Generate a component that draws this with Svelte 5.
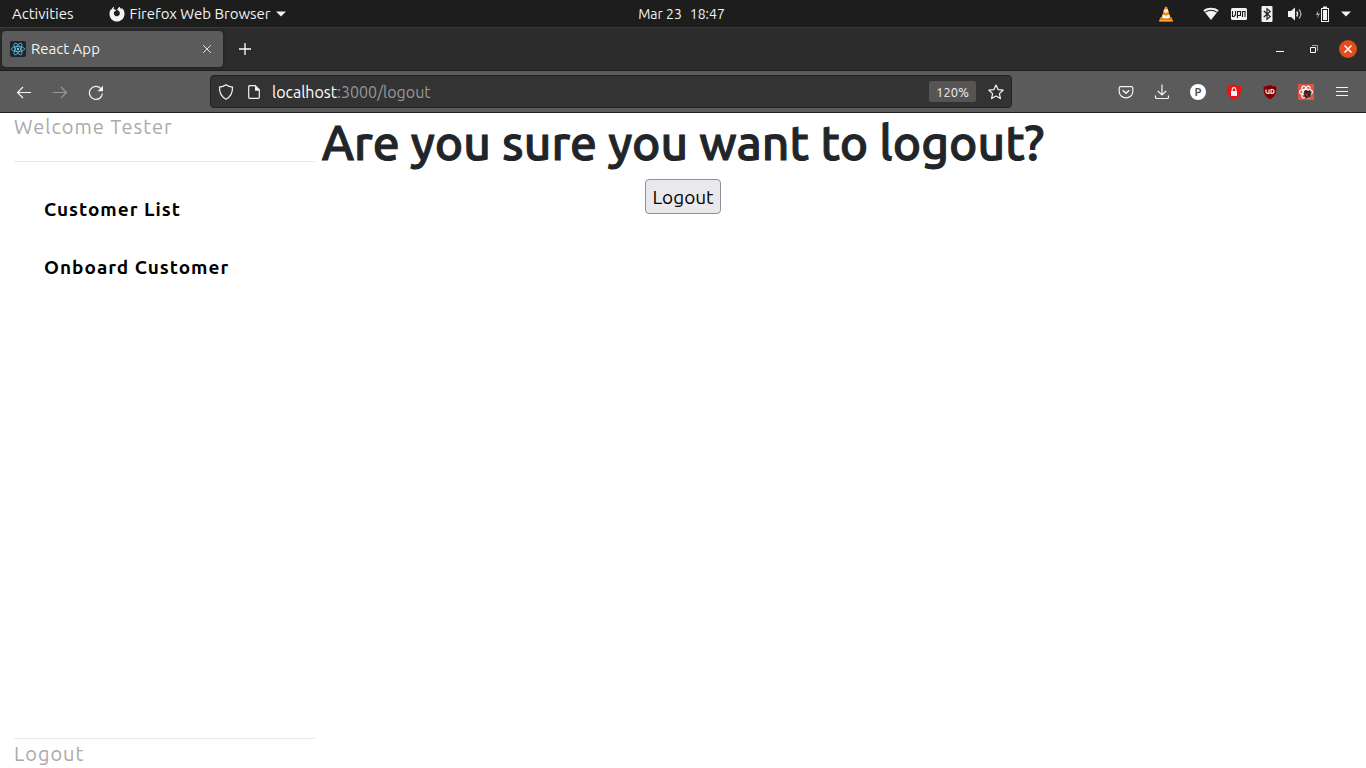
<script>
  const links = ['Customer List', 'Onboard Customer'];
  const orbits = [0, 60, 120];
</script>

<svelte:head><title>React App</title></svelte:head>

<div class="screen">
  <header class="system">
    <div class="system-left">
      <button>Activities</button>
      <button class="app-menu">
        <svg width="16" height="16" viewBox="0 0 16 16"><path fill="#f2f2f2" d="M5 .6 4.7 3 7.4 4.2 5.6 5.5C4.8 6.2 4.6 7.4 5.1 8.5c.7 1.5 2.3 2.2 3.8 1.6 1.8-.6 2.5-2.7 1.6-4.3C9.8 4.8 9 4.2 8.1 4.1 8.6 2.4 9.6 1.3 11 .8c-.1 1 .4 1.6 1.3 2.2l.5-1c2 1.600 2.900 3.800 2.700 6.300-.3 4.200-3.500 7.300-7.500 7.300-4.200 0-7.400-3.200-7.500-7.300C.4 6 1.100 4.200 2.200 3l.3 1C3 2.500 3.900 1.300 5 .6z"/></svg>
        <span>Firefox Web Browser</span>
        <svg width="10" height="6" viewBox="0 0 10 6"><path fill="#f2f2f2" d="M0 .5h10L5 5.500z"/></svg>
      </button>
    </div>
    <button class="clock"><span>Mar 23</span><span>18:47</span></button>
    <div class="tray">
      <svg class="vlc" width="16" height="16" viewBox="0 0 16 16"><path fill="#e87800" d="M2.500 11h11l1.800 4.500H.7z"/><path fill="#f58a0b" d="M7 .7h2l3.400 11.100c-1.500 1.800-7.300 1.800-8.800 0z"/><path fill="#eee" d="m6.300 3-.9 3q2.600 1.300 5.200 0l-.9-3q-1.700.8-3.400 0zM4.600 8.600l-.8 2.600q4.200 2.400 8.400 0l-.8-2.600q-3.400 1.800-6.800 0z"/><path stroke="#ffc35c" d="M1.500 14.800h13"/></svg>
      <svg width="16" height="16" viewBox="0 0 16 16"><path fill="#f2f2f2" d="M.3 4.300C4.500 1 11.500 1 15.700 4.300L8 14z"/><path fill="none" stroke="#1d1d1d" stroke-width="1.100" d="M2.300 6.100C5.500 3.600 10.500 3.600 13.700 6.100"/></svg>
      <svg width="16" height="16" viewBox="0 0 16 16"><rect y="2" width="16" height="12" rx="1.500" fill="#f2f2f2"/><path fill="none" stroke="#1d1d1d" stroke-width="1.100" d="M1.500 5v5.500H3L4.500 9V5M6.500 12V5.500h3v4h-3M11.500 11V5.500H14V11"/></svg>
      <svg width="16" height="16" viewBox="0 0 16 16"><rect x="2.500" width="11" height="16" rx="1" fill="#f2f2f2"/><path fill="none" stroke="#1d1d1d" stroke-width="1.200" d="m4.800 5 6.400 5.600L8 13.300V2.700l3.200 2.700L4.800 11"/></svg>
      <svg width="16" height="16" viewBox="0 0 16 16"><path fill="#f2f2f2" d="M1 5h3l4-3.500v13L4 11H1z"/><path fill="none" stroke="#f2f2f2" stroke-width="1.300" d="M9.700 5.500q1.800 2.500 0 5"/><path fill="none" stroke="#aaa" stroke-width="1.300" d="M12 3.500q3.800 4.500 0 9"/></svg>
      <div class="power">
        <svg width="16" height="16" viewBox="0 0 16 16"><path fill="#aaa" d="M3.500 4 .8 9H3l-.9 4L5 7.500H2.900z"/><path fill="#f2f2f2" d="M8 .500h4V2h2v14H6V2h2zM7 3v12h6V3z" fill-rule="evenodd"/><path fill="#f2f2f2" d="M8 4h4v10H8z"/></svg>
        <svg width="10" height="6" viewBox="0 0 10 6"><path fill="#f2f2f2" d="M0 .5h10L5 5.500z"/></svg>
      </div>
    </div>
  </header>

  <div class="tabs">
    <div class="tab">
      <svg width="16" height="16" viewBox="0 0 16 16"><rect width="16" height="16" rx="2" fill="#20232a"/><g fill="none" stroke="#61dafb" stroke-width=".7">{#each orbits as a}<ellipse cx="8" cy="8" rx="6.600" ry="2.600" transform="rotate({a} 8 8)"/>{/each}</g><circle cx="8" cy="8" r="1.200" fill="#61dafb"/></svg>
      <span>React App</span>
      <button aria-label="Close tab"><svg width="10" height="10" viewBox="0 0 10 10"><path stroke="#e4e4e4" d="m1.200 1.200 7.600 7.600m0-7.600L1.200 8.800"/></svg></button>
    </div>
    <button class="new-tab" aria-label="New tab"><svg width="12" height="12" viewBox="0 0 12 12"><path stroke="#fff" stroke-width="1.300" d="M6 0v12M0 6h12"/></svg></button>
    <div class="window-controls">
      <button aria-label="Minimize"><svg width="18" height="18" viewBox="0 0 18 18"><path stroke="#fff" d="M5 11.500h8"/></svg></button>
      <button aria-label="Restore"><svg width="18" height="18" viewBox="0 0 18 18"><path fill="none" stroke="#aaa" d="M7 5.500h5.500V11"/><path fill="none" stroke="#fff" d="M5.500 7.500h5v5h-5z"/></svg></button>
      <button aria-label="Close window"><svg width="18" height="18" viewBox="0 0 18 18"><circle cx="9" cy="9" r="9" fill="#e34c1b"/><path stroke="#fff" stroke-width="1.500" d="m5.500 5.500 7 7m0-7-7 7"/></svg></button>
    </div>
  </div>

  <div class="toolbar">
    <div class="tools">
      <button aria-label="Back"><svg width="16" height="16" viewBox="0 0 16 16"><path d="M15 8.500H1.500M7 3 1.500 8.500 7 14"/></svg></button>
      <button aria-label="Forward" disabled><svg width="16" height="16" viewBox="0 0 16 16"><path d="M1 8.500h13.500M9 3l5.500 5.500L9 14"/></svg></button>
      <button aria-label="Reload"><svg width="16" height="16" viewBox="0 0 16 16"><path d="M14.400 9.500A6.500 6.500 0 1 1 12.700 4.500"/><path class="solid" d="M15 1.800v5.400H9.600z"/></svg></button>
    </div>
    <div class="address">
      <svg width="16" height="16" viewBox="0 0 16 16"><path d="M8 .8c1.800 1.300 4 2.100 6.500 2.300C14.700 9 13 12.800 8 15.200 3 12.800 1.300 9 1.500 3.100 4 2.900 6.200 2.100 8 .8z"/></svg>
      <svg width="16" height="16" viewBox="0 0 16 16"><path d="M3.700 1.700h5.500l4.100 4.100v7.500q0 1-1 1H3.700q-1 0-1-1V2.700q0-1 1-1z"/><path class="solid" d="M9 1.500 13.500 6v.800H9z"/></svg>
      <a class="url" href="#logout">localhost<span>:3000/logout</span></a>
      <button class="scale">120%</button>
      <button aria-label="Bookmark this page"><svg width="16" height="16" viewBox="0 0 16 16"><path stroke-linejoin="round" d="m8 1 2.100 4.600 5 .6-3.700 3.400 1 5L8 12.100l-4.400 2.500 1-5L.9 6.200l5-.6z"/></svg></button>
    </div>
    <div class="tools">
      <button aria-label="Save to Pocket"><svg width="16" height="16" viewBox="0 0 16 16"><path d="M2.500 2.700h11q1.300 0 1.300 1.300v3.500a6.800 6.300 0 0 1-13.600 0V4q0-1.300 1.300-1.300z"/><path stroke-width="1.500" d="M4.800 6.300 8 9.300l3.200-3"/></svg></button>
      <button aria-label="Downloads"><svg width="16" height="16" viewBox="0 0 16 16"><path d="M8 .5V11M3.800 7 8 11l4.200-4M1.500 11.500v1.700q0 1.300 1.300 1.300h10.400q1.300 0 1.300-1.300v-1.700"/></svg></button>
      <button class="profile" aria-label="Privacy extension">P</button>
      <button aria-label="Secure connection"><svg width="16" height="16" viewBox="0 0 16 16"><path class="red" d="M8 .2c2 1.200 4.500 2 7.200 2.100.3 6.700-1.500 11.300-7.200 13.500C2.300 13.600.5 9 .8 2.300 3.500 2.200 6 1.400 8 .2z"/><path class="solid" d="M5 7h6v5H5z"/><path d="M6.200 7V5.500a1.800 1.800 0 0 1 3.600 0V7"/></svg></button>
      <button aria-label="uBlock Origin"><svg width="16" height="16" viewBox="0 0 16 16"><path class="maroon" d="M8 .5c2 1 4.300 1.700 6.800 1.800.3 6.500-1.300 11-6.800 13.200C2.500 13.300.9 8.800 1.200 2.300 3.700 2.200 6 1.500 8 .5z"/><path d="M4 5.500v2.300q0 1.500 1.500 1.500H7V5.500M9 5.500v3.800h1q2 0 2-1.900t-2-1.900z"/></svg></button>
      <button aria-label="React Developer Tools"><svg width="16" height="16" viewBox="0 0 16 16"><path class="coral" d="M0 0h16v16H0z"/>{#each orbits as a}<ellipse cx="8" cy="8" rx="6.500" ry="2.600" transform="rotate({a} 8 8)"/>{/each}<path class="bug" d="M6 7.500 8 6l2 1 2-1 .5 2 1 1-1 1.500.3 2-1.800 1.500-1.500-.5L8 14.500l-1-1.800-1.500-.2 1-1.800L5 9.500l1.500-.8z"/><path class="seam" d="m7 9 4 4M11 8l-3 4"/></svg></button>
      <button aria-label="Application menu"><svg width="16" height="16" viewBox="0 0 16 16"><path d="M2 3.500h12M2 7.500h12M2 11.500h12"/></svg></button>
    </div>
  </div>

  <div class="page">
    <aside>
      <p class="welcome">Welcome Tester</p>
      <nav>{#each links as link}<a href="#{link}">{link}</a>{/each}</nav>
      <a class="sign-out" href="#logout">Logout</a>
    </aside>
    <main>
      <h1>Are you sure you want to logout?</h1>
      <button class="confirm">Logout</button>
    </main>
  </div>
</div>

<style>
  :global(body) { margin: 0; background: #fff; }
  .screen { display: flex; flex-direction: column; min-height: 100vh; font: 15px/20px Ubuntu, "Noto Sans", sans-serif; color: #f2f2f2; }
  button { display: flex; align-items: center; justify-content: center; margin: 0; padding: 0; border: 0; background: none; color: inherit; font: inherit; }
  a { color: inherit; text-decoration: none; }
  svg { display: block; flex: none; }
  .system { display: grid; grid-template-columns: 1fr auto 1fr; align-items: center; height: 27px; padding: 0 15px 0 12px; background: #1d1d1d; border-bottom: 1px solid #3a3a3a; }
  .system-left, .tray, .power, .window-controls, .tools { display: flex; align-items: center; }
  .system-left { gap: 35px; }
  .app-menu { gap: 5px; }
  .clock { gap: 8px; font-size: 14px; }
  .tray { justify-content: flex-end; gap: 12px; }
  .vlc { margin-right: 17px; }
  .power { gap: 10px; }
  .tabs { display: flex; align-items: center; height: 42px; padding: 0 9px 0 2px; background: #2c2c2c; border-bottom: 1px solid #1c1b1d; }
  .tab { display: flex; align-items: center; box-sizing: border-box; width: 221px; height: 36px; padding: 0 11px 0 8px; gap: 5px; border-radius: 4px; background: #5b5b5b; box-shadow: 0 0 3px #1a1a1a; }
  .tab button { margin-left: auto; }
  .new-tab { margin-left: 16px; }
  .window-controls { margin-left: auto; gap: 16px; }
  .toolbar { display: flex; align-items: center; height: 41px; padding: 0 16px; background: #5b5b5b; border-bottom: 1px solid #222; }
  .tools { gap: 20px; }
  .toolbar svg { fill: none; stroke: #f4f4f4; stroke-width: 1.2; }
  .toolbar button:disabled { opacity: .4; }
  .toolbar .solid { fill: #f4f4f4; stroke: none; }
  .toolbar .red { fill: #e11; stroke: none; }
  .toolbar .maroon { fill: #800000; stroke: #92605f; stroke-width: .5; }
  .toolbar .coral { fill: #e05244; stroke: none; }
  .toolbar .bug { fill: #222; stroke: none; }
  .toolbar .seam { stroke: #e05244; stroke-width: .6; }
  .address { display: flex; flex: 1; align-items: center; box-sizing: border-box; height: 33px; margin: 0 106px; padding: 0 7px; gap: 12px; border: 1px solid #222; border-radius: 4px; background: #333; }
  .url { flex: 1; margin-left: -2px; color: #fff; font-size: 16px; }
  .url span { color: #999; }
  .scale { height: 21px; padding: 0 7px; border-radius: 2px; background: #555; font-size: 13px; }
  .profile { width: 16px; height: 16px; border-radius: 50%; background: #fff; color: #555; font-size: 11px; font-weight: 700; }
  .page { display: grid; flex: 1; grid-template-columns: 301px 1fr 301px; padding: 0 14px; color: #212529; background: #fff; }
  aside { display: flex; flex-direction: column; font-size: 20px; letter-spacing: 1px; }
  .welcome { box-sizing: border-box; height: 49px; margin: 0; border-bottom: 1px solid #e9e9e9; color: #aaa; line-height: 28px; }
  nav { display: flex; flex-direction: column; padding: 18px 30px 0; }
  nav a { color: #000; font-size: 19px; font-weight: 700; line-height: 58px; }
  .sign-out { margin-top: auto; border-top: 1px solid #e9e9e9; color: #aaa; line-height: 29px; }
  main { display: flex; flex-direction: column; align-items: center; }
  h1 { margin: 0 0 8px; font-size: 48px; line-height: 58px; font-weight: 500; white-space: nowrap; -webkit-text-stroke: 1px currentColor; }
  .confirm { height: 35px; padding: 0 6px; border: 1px solid #8f8f9d; border-radius: 4px; background: #e9e9ed; color: #000; font-size: 19px; }
</style>
